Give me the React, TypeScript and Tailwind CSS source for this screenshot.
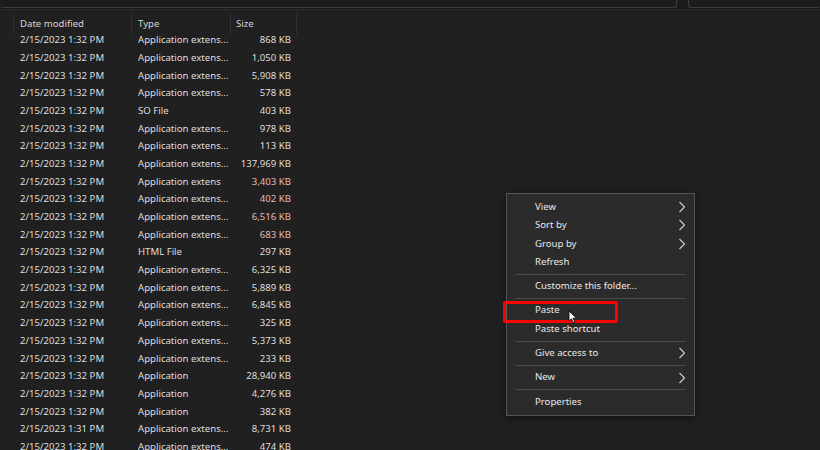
import React from "react";

const rows: [string, string, string, string?][] = [
  ["2/15/2023 1:32 PM", "Application extens...", "868 KB"],
  ["2/15/2023 1:32 PM", "Application extens...", "1,050 KB"],
  ["2/15/2023 1:32 PM", "Application extens...", "5,908 KB"],
  ["2/15/2023 1:32 PM", "Application extens...", "578 KB"],
  ["2/15/2023 1:32 PM", "SO File", "403 KB"],
  ["2/15/2023 1:32 PM", "Application extens...", "978 KB"],
  ["2/15/2023 1:32 PM", "Application extens...", "113 KB"],
  ["2/15/2023 1:32 PM", "Application extens...", "137,969 KB"],
  ["2/15/2023 1:32 PM", "Application extens", "3,403 KB", "r"],
  ["2/15/2023 1:32 PM", "Application extens...", "402 KB", "r"],
  ["2/15/2023 1:32 PM", "Application extens...", "6,516 KB", "r"],
  ["2/15/2023 1:32 PM", "Application extens...", "683 KB", "r"],
  ["2/15/2023 1:32 PM", "HTML File", "297 KB"],
  ["2/15/2023 1:32 PM", "Application extens...", "6,325 KB"],
  ["2/15/2023 1:32 PM", "Application extens...", "5,889 KB"],
  ["2/15/2023 1:32 PM", "Application extens...", "6,845 KB"],
  ["2/15/2023 1:32 PM", "Application extens...", "325 KB"],
  ["2/15/2023 1:32 PM", "Application extens...", "5,373 KB"],
  ["2/15/2023 1:32 PM", "Application extens...", "233 KB"],
  ["2/15/2023 1:32 PM", "Application", "28,940 KB"],
  ["2/15/2023 1:32 PM", "Application", "4,276 KB"],
  ["2/15/2023 1:32 PM", "Application", "382 KB"],
  ["2/15/2023 1:31 PM", "Application extens...", "8,731 KB"],
  ["2/15/2023 1:32 PM", "Application extens...", "474 KB"],
];

const Chevron = () => (
  <svg width="8" height="12" viewBox="0 0 8 12" className="text-[#cfcfcf]">
    <path d="M1.5 1 L6.5 6 L1.5 11" fill="none" stroke="currentColor" strokeWidth="1.1" />
  </svg>
);

const Sep = () => <div className="mx-[8px] my-[2.5px] h-px bg-[#4a4a4a]" />;

const MenuItem = ({ label, sub }: { label: string; sub?: boolean }) => (
  <div className="flex h-[18.3px] items-center justify-between pl-[28px] pr-[8px]">
    <span>{label}</span>
    {sub ? <Chevron /> : null}
  </div>
);

export default function App() {
  return (
    <div
      className="relative h-[450px] w-[820px] overflow-hidden bg-[#202020] text-[9.6px] text-[#dedede]"
      style={{ fontFamily: '"Segoe UI", "Noto Sans", sans-serif' }}
    >
      {/* top strip */}
      <div className="flex h-[9px] gap-[11px] bg-[#1a1a1a]">
        <div className="h-[8px] w-[677px] rounded-b-[3px] border-b border-r border-[#3b3b3b] bg-[#1c1c1c]" />
        <div className="h-[8px] flex-1 rounded-b-[3px] border-b border-l border-[#3b3b3b] bg-[#1c1c1c]" />
      </div>
      <div className="h-px bg-[#2a2a2a]" />

      {/* header */}
      <div className="mt-[4px] flex h-[20px] items-center text-[#d4d4d4]">
        <div className="h-full w-[14px] border-r border-[#333]" />
        <div className="flex h-full w-[118px] items-center border-r border-[#333] pl-[6px]">Date modified</div>
        <div className="flex h-full w-[99px] items-center border-r border-[#333] pl-[6px]">Type</div>
        <div className="flex h-full w-[66px] items-center border-r border-[#333] pl-[5px]">Size</div>
      </div>

      {/* rows */}
      <div className="mt-[-2.5px]">
        {rows.map((r, i) => (
          <div key={i} className="flex h-[17.7px] items-center">
            <div className="w-[20px]" />
            <div className="w-[118px] whitespace-nowrap">{r[0]}</div>
            <div className="w-[93px] overflow-hidden whitespace-nowrap">{r[1]}</div>
            <div className={"w-[60px] whitespace-nowrap text-right " + (r[3] ? "text-[#e3b8b8]" : "")}>{r[2]}</div>
          </div>
        ))}
      </div>

      {/* context menu */}
      <div className="absolute left-[506px] top-[193px] w-[189px] border border-[#555] bg-[#2b2b2b] py-[4px] text-[#e8e8e8] shadow-[0_2px_8px_rgba(0,0,0,0.5)]">
        <MenuItem label="View" sub />
        <MenuItem label="Sort by" sub />
        <MenuItem label="Group by" sub />
        <MenuItem label="Refresh" />
        <Sep />
        <MenuItem label="Customize this folder..." />
        <Sep />
        <MenuItem label="Paste" />
        <MenuItem label="Paste shortcut" />
        <Sep />
        <MenuItem label="Give access to" sub />
        <Sep />
        <MenuItem label="New" sub />
        <Sep />
        <MenuItem label="Properties" />
      </div>

      {/* highlight box */}
      <div className="absolute left-[503px] top-[301px] h-[22px] w-[115px] rounded-[2px] border-[3px] border-[#ff0000]" />

      {/* cursor */}
      <svg className="absolute left-[568px] top-[310px]" width="10" height="14" viewBox="0 0 10 14">
        <path d="M1 1 L1 11 L3.5 8.8 L5.5 13 L7 12.3 L5 8.2 L8.5 8.2 Z" fill="#fff" stroke="#000" strokeWidth="0.8" />
      </svg>
    </div>
  );
}
